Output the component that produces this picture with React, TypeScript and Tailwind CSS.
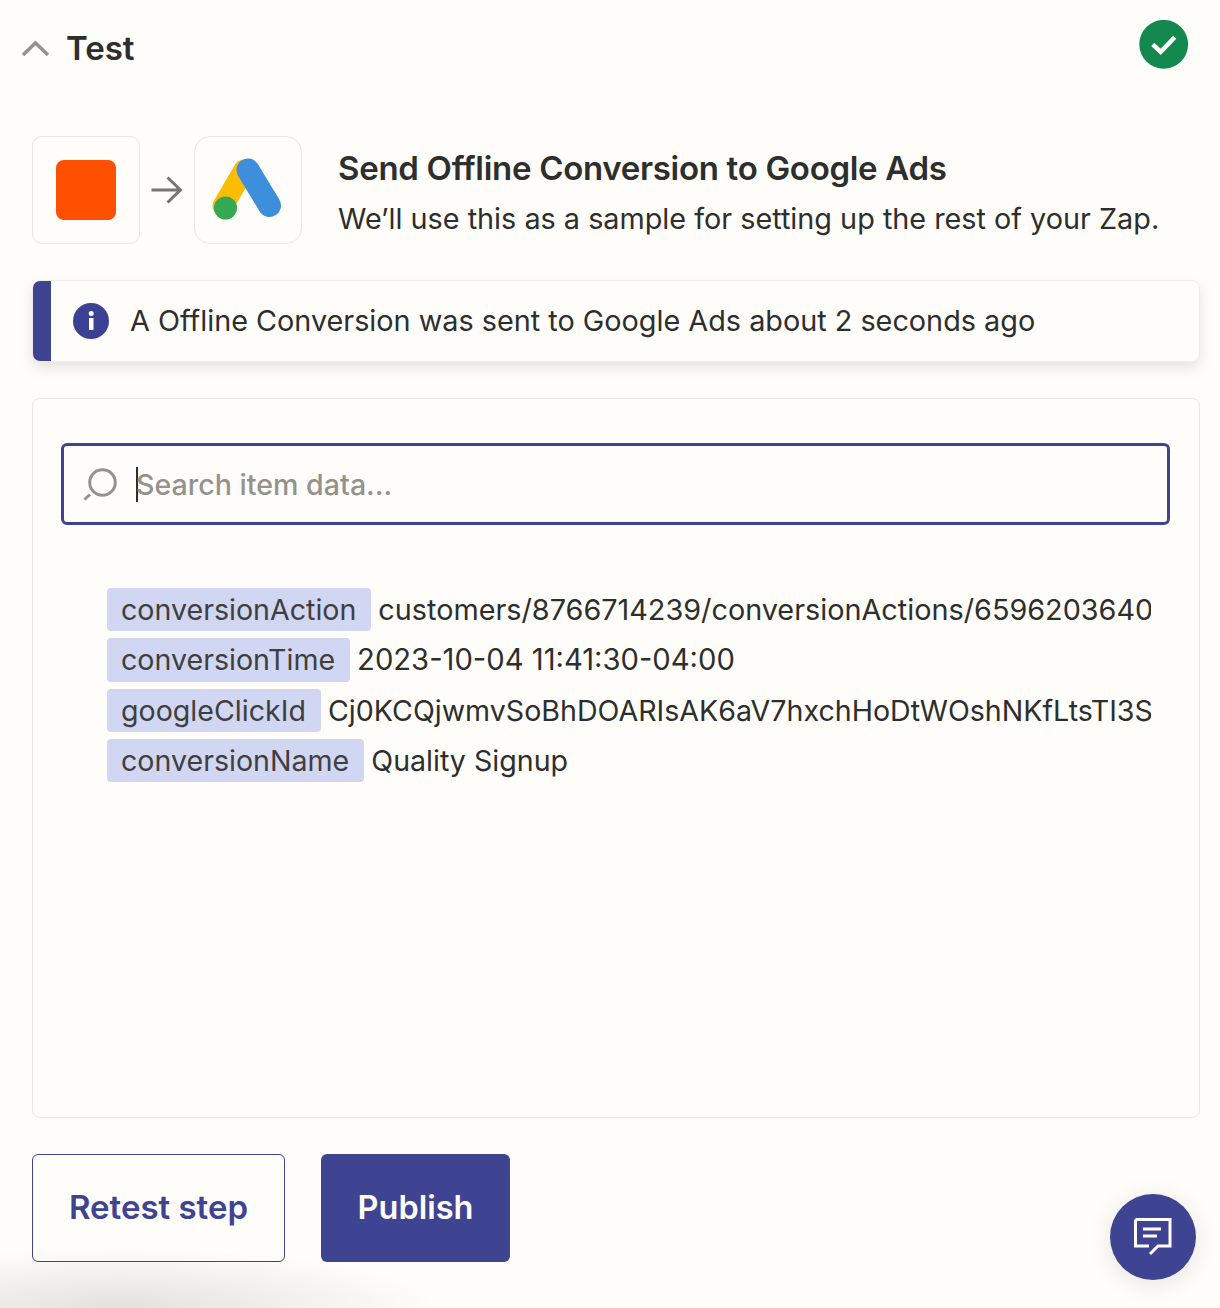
const rows = [
  { name: 'conversionAction', value: 'customers/8766714239/conversionActions/6596203640', size: 'text-[28.8px]' },
  { name: 'conversionTime', value: '2023-10-04 11:41:30-04:00', size: 'text-[29.2px]' },
  { name: 'googleClickId', value: 'Cj0KCQjwmvSoBhDOARIsAK6aV7hxchHoDtWOshNKfLtsTI3S', size: 'text-[28.6px]' },
  { name: 'conversionName', value: 'Quality Signup', size: 'text-[28.6px]' },
];

function GoogleAdsLogo() {
  return (
    <svg width="72" height="64" viewBox="0 0 72 64" fill="none">
      <path d="M11 48 L32 12" stroke="#fbbc04" strokeWidth="21" strokeLinecap="round" />
      <path d="M36 12 L57.500 47.500" stroke="#3d8fdc" strokeWidth="23" strokeLinecap="round" />
      <circle cx="13.500" cy="50" r="11.500" fill="#34a853" />
    </svg>
  );
}

export default function App() {
  return (
    <main className="relative h-[1308px] w-[1220px] overflow-hidden bg-[#fffdf9] font-['Inter',sans-serif] text-[#2d2e2e]">
      <header className="flex h-[136px] items-start justify-between pl-[20px] pr-[31px] pt-[20px]">
        <div className="flex items-start pt-[8px]">
          <svg width="32" height="20" viewBox="0 0 32 20" fill="none" stroke="#95928e" strokeWidth="3.500" className="mt-[11px]">
            <path d="M3 16 L15.500 4 L28 16" />
          </svg>
          <h1 className="ml-[14px] text-[33px] leading-[40px] font-semibold">Test</h1>
        </div>
        <svg width="50" height="50" viewBox="0 0 50 50">
          <circle cx="24.700" cy="24.300" r="24.400" fill="#13884f" />
          <path d="M13.700 24.300 L21.700 31.800 L35.700 17.300" fill="none" stroke="#fffdf9" strokeWidth="4.500" />
        </svg>
      </header>

      <div className="pl-[32px] pr-[20px]">
        <section className="flex items-center">
          <div className="flex h-[108px] w-[108px] items-center justify-center rounded-[10px] border border-[#e8e6e3]">
            <div className="h-[60px] w-[60px] rounded-[8px] bg-[#ff4f00]" />
          </div>
          <svg width="54" height="32" viewBox="0 0 54 32" fill="none" stroke="#777572" strokeWidth="3">
            <path d="M11.500 16 H40.500 M27.500 3.500 L40.500 16 L27.500 28.500" />
          </svg>
          <div className="flex h-[108px] w-[108px] items-center justify-center rounded-[16px] border border-[#e8e6e3]">
            <GoogleAdsLogo />
          </div>
          <div className="ml-[36px]">
            <h2 className="mt-[7px] text-[33px] leading-[40px] font-semibold tracking-[-0.3px]">Send Offline Conversion to Google Ads</h2>
            <p className="mt-[11px] text-[28.8px] leading-[40px]">We’ll use this as a sample for setting up the rest of your Zap.</p>
          </div>
        </section>

        <section className="mt-[36px] flex h-[82px] items-center overflow-hidden rounded-[8px] border border-[#eeece9] shadow-[0_6px_14px_rgba(0,0,0,0.1)]">
          <div className="h-full w-[18px] bg-[#3e4492]" />
          <svg width="36" height="36" viewBox="0 0 36 36" className="ml-[22px]">
            <circle cx="18" cy="18" r="18" fill="#3b4293" />
            <rect x="16" y="15" width="4.500" height="12" fill="#fffdf9" />
            <circle cx="18.200" cy="10.500" r="2.500" fill="#fffdf9" />
          </svg>
          <p className="ml-[21px] text-[28.8px] leading-[40px]">A Offline Conversion was sent to Google Ads about 2 seconds ago</p>
        </section>

        <section className="mt-[36px] h-[720px] rounded-[8px] border border-[#e8e6e3] pl-[28px] pr-[29px] pt-[44px]">
          <div className="flex h-[82px] items-center rounded-[6px] border-[3px] border-[#3e4492] pl-[19px]">
            <svg width="36" height="36" viewBox="0 0 36 36" fill="none" stroke="#95928e" strokeWidth="3">
              <circle cx="19.500" cy="16.500" r="12.800" />
              <path d="M1.500 33.500 L7 28.500" />
            </svg>
            <div className="ml-[17px] h-[35px] w-[2px] bg-[#2d2e2e]" />
            <span className="ml-[-2px] pt-[2px] text-[28.6px] font-medium text-[#95928e]">Search item data...</span>
          </div>

          <dl className="mt-[63px] flex flex-col gap-[7px] pl-[46px] pr-[19px]">
            {rows.map((row) => (
              <div key={row.name} className="flex h-[43.300px] items-center">
                <dt className="h-full shrink-0 rounded-[4px] bg-[#d1d6f3] pl-[14px] pr-[15px] text-[28.6px] leading-[43px] text-[#403f3e]">
                  {row.name}
                </dt>
                <dd className={`ml-[7px] h-full overflow-hidden leading-[43px] whitespace-nowrap ${row.size}`}>{row.value}</dd>
              </div>
            ))}
          </dl>
        </section>

        <div className="mt-[36px] flex gap-[36px]">
          <button className="h-[108px] w-[253px] rounded-[6px] border border-[#3e4492] text-[33px] font-semibold text-[#3e4492]">
            Retest step
          </button>
          <button className="h-[108px] w-[189px] rounded-[6px] bg-[#3e4492] text-[32.5px] font-semibold text-[#fffdf9]">
            Publish
          </button>
        </div>
      </div>

      <div className="absolute bottom-[-60px] left-[-200px] h-[120px] w-[640px] rounded-full bg-[radial-gradient(closest-side,rgba(0,0,0,0.11),rgba(0,0,0,0))]" />

      <button className="absolute left-[1110px] top-[1194px] flex h-[86px] w-[86px] items-center justify-center rounded-full bg-[#3e4492] shadow-[0_4px_24px_rgba(0,0,0,0.1)]">
        <svg width="38" height="38" viewBox="0 0 38 38" fill="none" stroke="#fffdf9" strokeWidth="3">
          <path d="M1.500 1.500 H36 V28 H24 L16 36" />
          <path d="M1.500 1.500 V28 H15" />
          <path d="M9 11 H27 M9 18 H23" />
        </svg>
      </button>
    </main>
  );
}
